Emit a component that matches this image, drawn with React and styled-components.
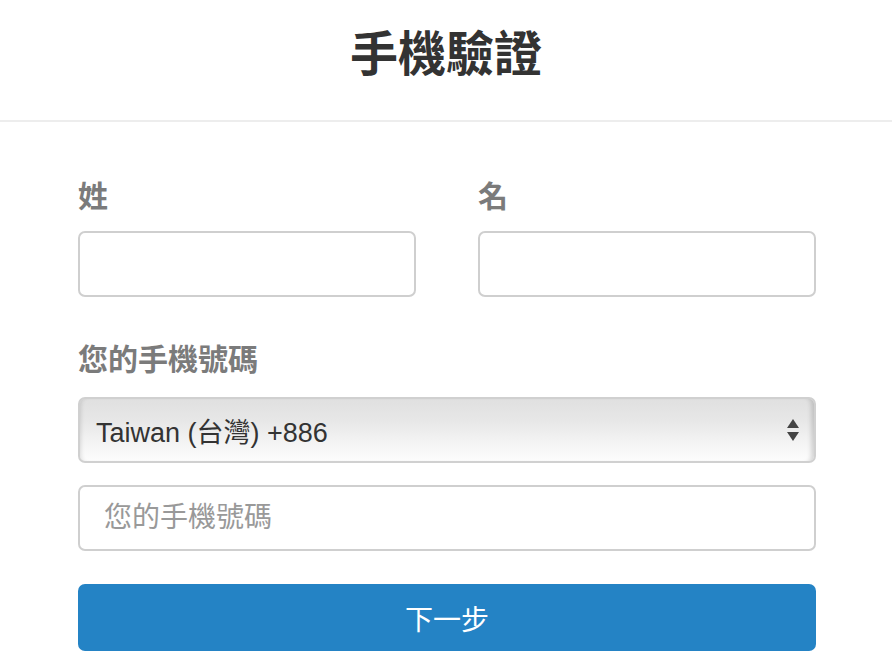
import React from "react";
import styled, { createGlobalStyle } from "styled-components";

const GlobalStyle = createGlobalStyle`
  body {
    margin: 0;
    background: #fff;
    font-family: "Liberation Sans", "Noto Sans CJK TC", sans-serif;
  }
  * {
    box-sizing: border-box;
  }
`;

const Header = styled.header`
  height: 122px;
  display: flex;
  align-items: center;
  justify-content: center;
  border-bottom: 2px solid #ededed;
  h1 {
    margin: 0;
    font-size: 48px;
    font-weight: bold;
    color: #333;
    padding-bottom: 20px;
  }
`;

const Form = styled.form`
  width: 738px;
  margin: 0 0 0 78px;
  padding-top: 57px;
`;

const Row = styled.div`
  display: grid;
  grid-template-columns: 1fr 1fr;
  column-gap: 62px;
  margin-bottom: 45px;
`;

const Field = styled.div`
  display: flex;
  flex-direction: column;
`;

const Label = styled.label`
  font-size: 30px;
  line-height: 36px;
  font-weight: bold;
  color: #7b7b7b;
  margin-bottom: ${(p) => p.gap || 16}px;
`;

const Input = styled.input`
  height: 66px;
  width: 100%;
  border: 2px solid #cfcfcf;
  border-radius: 7px;
  padding: 0 24px;
  font-size: 28px;
  font-family: inherit;
  color: #333;
  margin-bottom: ${(p) => p.mb || 0}px;
  outline: none;
  &::placeholder {
    color: #999;
  }
`;

const SelectBox = styled.div`
  position: relative;
  height: 66px;
  border: 2px solid #d0d0d0;
  border-radius: 7px;
  display: flex;
  align-items: center;
  padding-left: 16px;
  margin-bottom: 22px;
  font-size: 27px;
  color: #333;
  background: linear-gradient(
    #e0e0e0 0%,
    #e7e7e7 35%,
    #f0f0f0 60%,
    #f8f8f8 85%,
    #fdfdfd 100%
  );
  box-shadow: inset 4px 0 4px -3px rgba(0, 0, 0, 0.12),
    inset -6px 0 4px -3px rgba(0, 0, 0, 0.15);
`;

const Arrows = styled.svg`
  position: absolute;
  right: 14px;
  top: 50%;
  transform: translateY(-50%);
`;

const Button = styled.button`
  width: 100%;
  height: 67px;
  border: none;
  border-radius: 7px;
  background: #2483c5;
  color: #fff;
  font-size: 28px;
  font-family: inherit;
`;

export default function App() {
  return (
    <>
      <GlobalStyle />
      <Header>
        <h1>手機驗證</h1>
      </Header>
      <Form onSubmit={(e) => e.preventDefault()}>
        <Row>
          <Field>
            <Label>姓</Label>
            <Input />
          </Field>
          <Field>
            <Label>名</Label>
            <Input />
          </Field>
        </Row>
        <Field>
          <Label gap={19}>您的手機號碼</Label>
          <SelectBox>
            Taiwan (台灣) +886
            <Arrows width="14" height="24" viewBox="0 0 14 24">
              <path d="M7 1 L13 10 L1 10 Z" fill="#444" />
              <path d="M1 14 L13 14 L7 23 Z" fill="#444" />
            </Arrows>
          </SelectBox>
          <Input placeholder="您的手機號碼" mb={33} />
          <Button type="submit">下一步</Button>
        </Field>
      </Form>
    </>
  );
}
